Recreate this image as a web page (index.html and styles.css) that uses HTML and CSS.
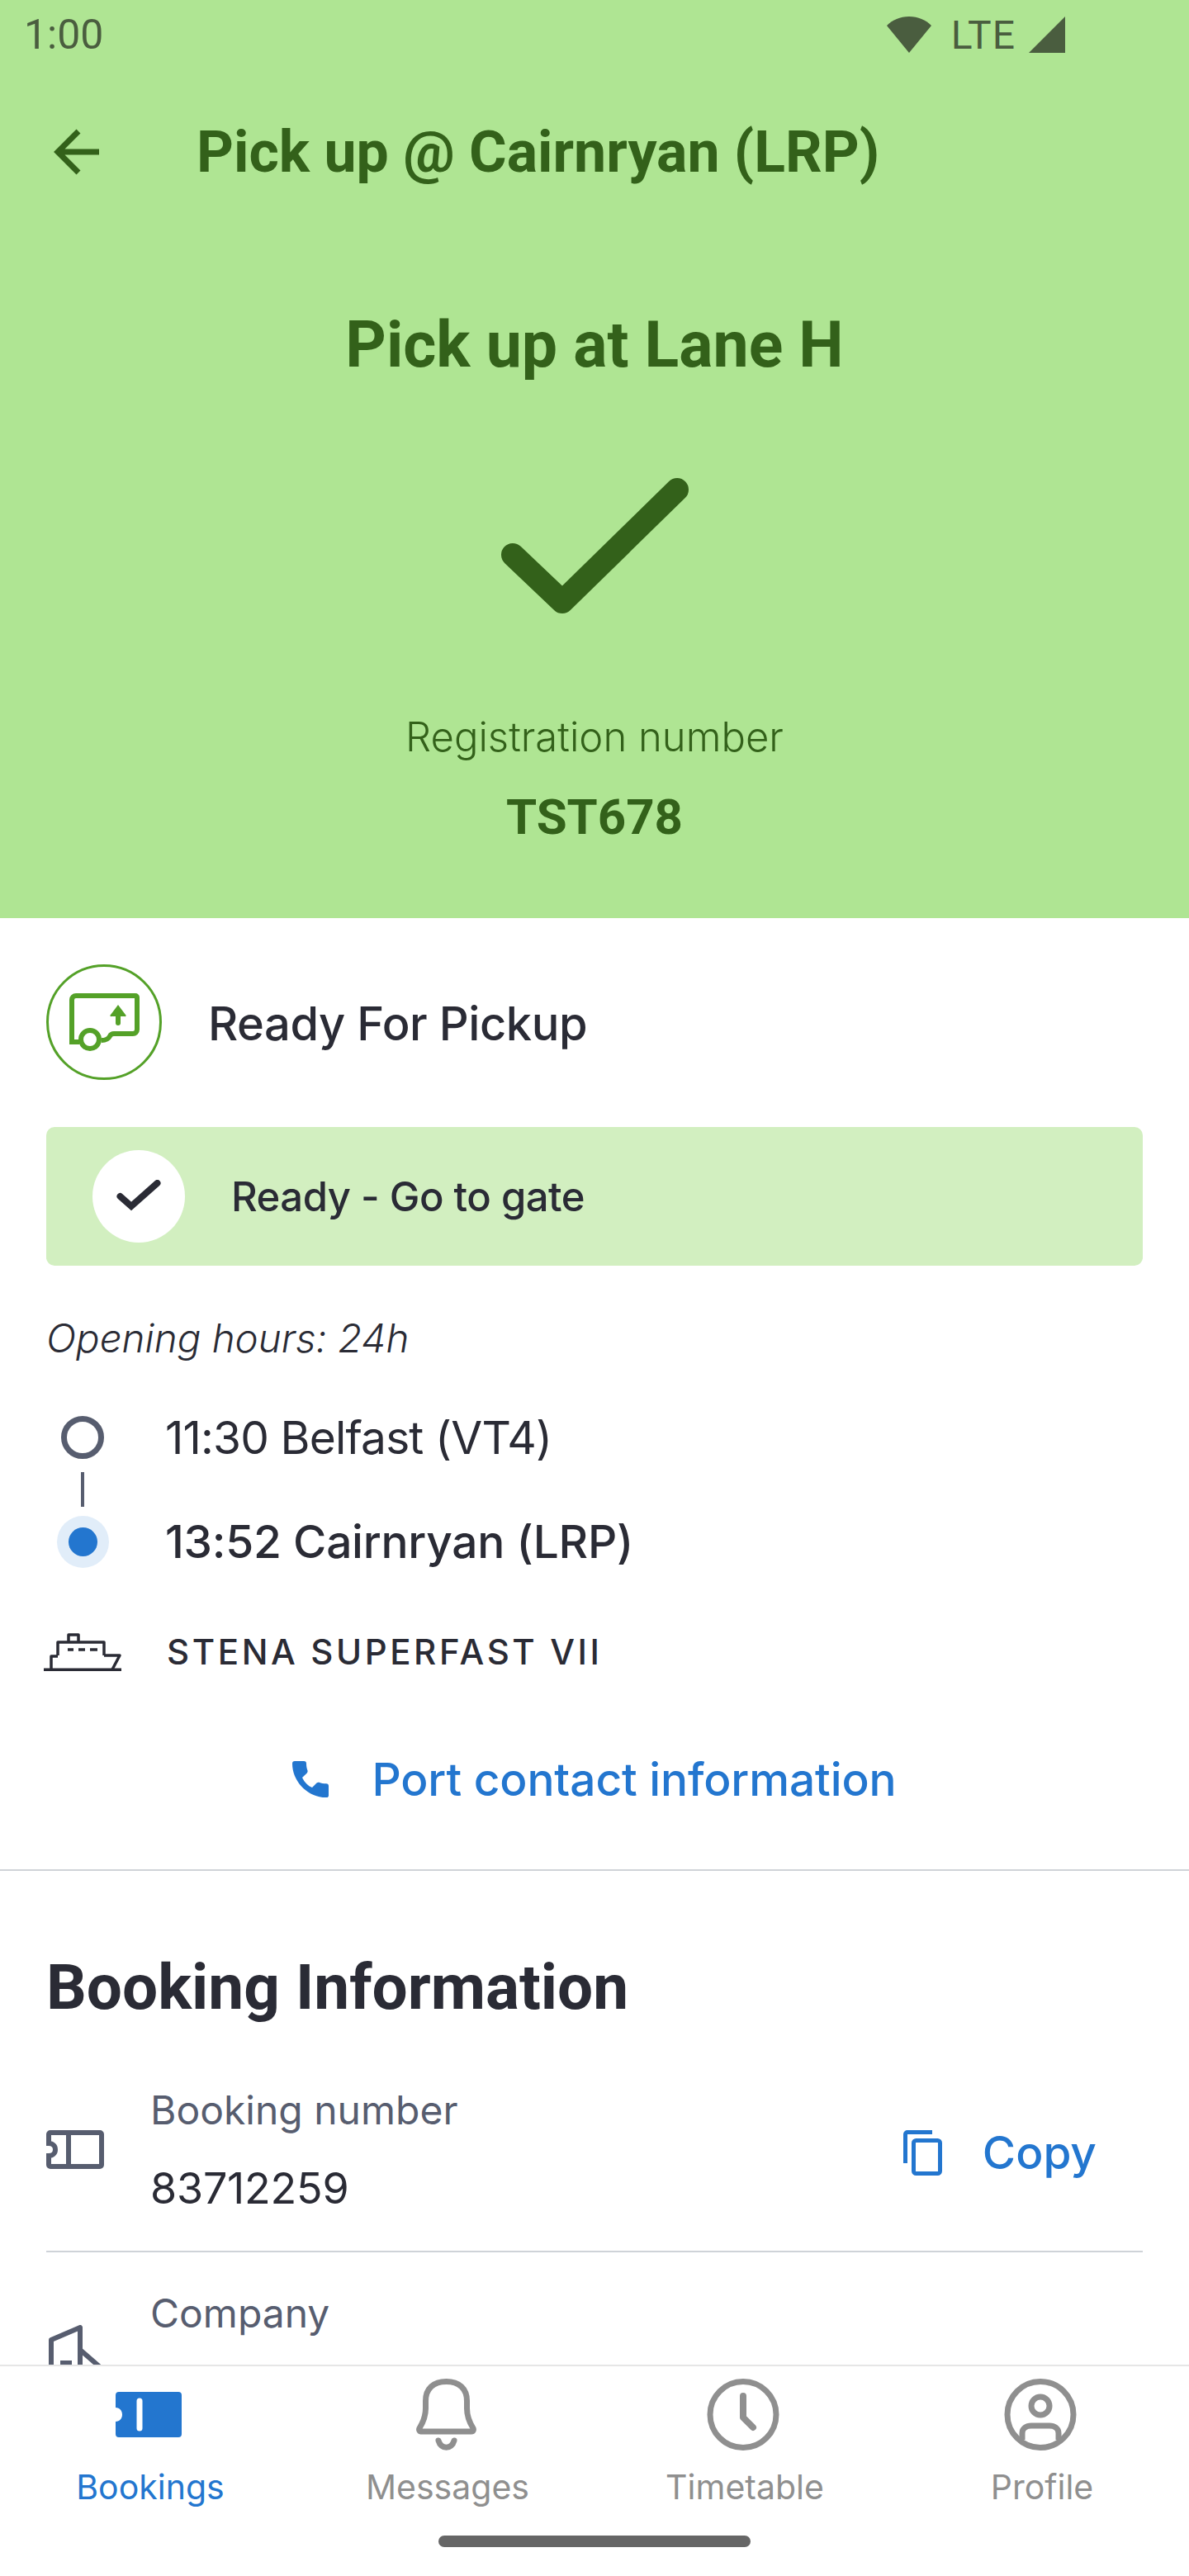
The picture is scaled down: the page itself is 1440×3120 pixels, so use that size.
FILE: index.html
```html
<!DOCTYPE html>
<html lang="en">
<head>
<meta charset="utf-8">
<title>Pick up @ Cairnryan (LRP)</title>
<link rel="stylesheet" href="styles.css">
</head>
<body>
<div class="screen">
  <header class="hero">
    <div class="status">
      <span class="clock">1:00</span>
      <div class="status-right">
        <svg class="wifi" viewBox="0 0 54 44"><path d="M27 44 0 11C7 4 16 0 27 0s20 4 27 11z"/></svg>
        <span class="lte">LTE</span>
        <svg class="signal" viewBox="0 0 44 44"><path d="M44 0v44H0z"/></svg>
      </div>
    </div>
    <div class="appbar">
      <svg class="back" viewBox="0 0 56 56"><path d="M56 28H6M31 3 6 28l25 25" fill="none" stroke="currentColor" stroke-width="7"/></svg>
      <h1 class="title">Pick up @ Cairnryan (LRP)</h1>
    </div>
    <div class="hero-body">
      <h2 class="lane">Pick up at Lane H</h2>
      <svg class="bigcheck" viewBox="0 0 227 166"><path d="M14 93l60 57L213 14" fill="none" stroke="currentColor" stroke-width="28" stroke-linecap="round" stroke-linejoin="round"/></svg>
      <p class="reg-label">Registration number</p>
      <p class="reg">TST678</p>
    </div>
  </header>

  <main class="content">
    <section class="top">
      <div class="state">
        <span class="state-ring">
          <svg viewBox="0 0 85 70" class="state-icon"><g fill="none" stroke="#54a128" stroke-width="6"><path d="M3 59V8a5 5 0 0 1 5-5h72a2 2 0 0 1 2 2v39a5 5 0 0 1-5 5H54c-3 0-4 1-5 3-2 4-5 5-10 5M0 59h12"/><circle cx="25" cy="56" r="11"/></g><path d="M59 36V22" stroke="#54a128" stroke-width="6" stroke-linecap="round"/><path d="M59 14l9 12a1 1 0 0 1-1 2H51a1 1 0 0 1-1-2z" fill="#54a128"/></svg>
        </span>
        <span class="state-text">Ready For Pickup</span>
      </div>
      <div class="banner">
        <span class="banner-dot">
          <svg viewBox="0 0 54 40" class="banner-check"><path d="M4.500 20 18 32 49.500 4" fill="none" stroke="#2a2b35" stroke-width="8" stroke-linecap="round"/></svg>
        </span>
        <span class="banner-text">Ready - Go to gate</span>
      </div>
      <p class="hours">Opening hours: 24h</p>
      <div class="route">
        <div class="stop">
          <span class="marker"><span class="open-dot"></span></span>
          <span class="stop-text thin">11:30 Belfast (VT4)</span>
        </div>
        <span class="route-line"></span>
        <div class="stop">
          <span class="marker"><span class="blue-dot"></span></span>
          <span class="stop-text strong">13:52 Cairnryan (LRP)</span>
        </div>
      </div>
      <div class="ship">
        <svg class="ship-icon" viewBox="0 0 94 46"><g fill="none" stroke="#2a2b35" stroke-width="3.500" stroke-linejoin="round"><path d="M30 11V2h12v9M17 27V11h56v16M9 44V28h8M73 27h19l-9 17"/></g><path d="M0 44.500h94" stroke="#2a2b35" stroke-width="4" stroke-linecap="round"/><path d="M29 20h7M42 20h8M56 20h9" stroke="#2a2b35" stroke-width="3.500"/></svg>
        <span class="ship-name">STENA SUPERFAST VII</span>
      </div>
      <a class="contact">
        <svg class="phone" viewBox="0 0 44 44"><path d="M3 0h11c2 0 3 1 3 3 0 3 .5 6 1.500 8.500.3 1 .1 2-.7 3L12 20c3 6 7 10 12 12l5.500-5.500c1-.8 2-1 3-.7 2.500 1 5.500 1.500 8.500 1.500 2 0 3 1 3 3v11c0 2-1 3-3 3C19 44 0 25 0 3c0-2 1-3 3-3z"/></svg>
        <span>Port contact information</span>
      </a>
    </section>

    <section class="info">
      <h3 class="info-title">Booking Information</h3>
      <div class="row">
        <svg class="row-icon" viewBox="0 0 70 47"><path d="M5 3h60a2 2 0 0 1 2 2v37a2 2 0 0 1-2 2H5a2 2 0 0 1-2-2V31c5 0 8-3 8-7.500S8 16 3 16V5a2 2 0 0 1 2-2zM27 3v41" fill="none" stroke="#575d6f" stroke-width="6"/></svg>
        <div class="row-text">
          <span class="row-label">Booking number</span>
          <span class="row-value">83712259</span>
        </div>
        <a class="copy">
          <svg class="copy-icon" viewBox="0 0 47 55"><path d="M35 2.500H5a2.500 2.500 0 0 0-2.500 2.500v35" fill="none" stroke="#2376cf" stroke-width="5"/><rect x="12.500" y="12.500" width="32" height="40" rx="3" fill="none" stroke="#2376cf" stroke-width="5"/></svg>
          <span>Copy</span>
        </a>
      </div>
      <div class="row row-second">
        <svg class="row-icon building" viewBox="0 0 64 66"><path d="M3 66V18L38 3v63M38 30l23 20v16M14 46h14M14 58h14" fill="none" stroke="#575d6f" stroke-width="6" stroke-linejoin="round"/></svg>
        <div class="row-text">
          <span class="row-label">Company</span>
        </div>
      </div>
    </section>
  </main>

  <nav class="nav">
    <div class="tabs">
      <div class="tab active">
        <span class="tab-icon"><svg viewBox="0 0 80 55" class="ico-ticket"><path d="M4 0h72a4 4 0 0 1 4 4v47a4 4 0 0 1-4 4H4a4 4 0 0 1-4-4V36c5 0 8-4 8-8.500S5 19 0 19V4a4 4 0 0 1 4-4z" fill="#2376cf"/><path d="M29 11v33" stroke="#fff" stroke-width="7" stroke-linecap="round"/></svg></span>
        <span class="tab-label">Bookings</span>
      </div>
      <div class="tab">
        <span class="tab-icon"><svg viewBox="0 0 73 87" class="ico-bell"><path d="M4 60c5-8 7.500-14 7.500-24v-9C11.500 12 21 3.500 36.500 3.500S61.500 12 61.500 27v9c0 10 2.500 16 7.500 24 1 2 0 4-2 4H6c-2 0-3-2-2-4z" fill="none" stroke="#8f8f8f" stroke-width="7"/><path d="M27 75c3 11 16 11 19 0" fill="none" stroke="#8f8f8f" stroke-width="7" stroke-linecap="round"/></svg></span>
        <span class="tab-label">Messages</span>
      </div>
      <div class="tab">
        <span class="tab-icon"><svg viewBox="0 0 88 87" class="ico-round"><circle cx="44" cy="43.500" r="40" fill="none" stroke="#8f8f8f" stroke-width="7"/><path d="M44 21v26l12 12" fill="none" stroke="#8f8f8f" stroke-width="8" stroke-linecap="round" stroke-linejoin="round"/></svg></span>
        <span class="tab-label">Timetable</span>
      </div>
      <div class="tab">
        <span class="tab-icon"><svg viewBox="0 0 88 87" class="ico-round"><circle cx="44" cy="43.500" r="40" fill="none" stroke="#8f8f8f" stroke-width="7"/><circle cx="44" cy="33" r="11" fill="none" stroke="#8f8f8f" stroke-width="7"/><path d="M22 74v-8c0-6 5-9 11-9h22c6 0 11 3 11 9v8" fill="none" stroke="#8f8f8f" stroke-width="7"/></svg></span>
        <span class="tab-label">Profile</span>
      </div>
    </div>
    <span class="home-bar"></span>
  </nav>
</div>
</body>
</html>
```
FILE: styles.css
```css
* { box-sizing: border-box; margin: 0; padding: 0; }
html, body { width: 1440px; height: 3120px; overflow: hidden; background: #fff; }
body { font-family: Inter, "Liberation Sans", sans-serif; color: #2a2b35; }
.screen { position: relative; width: 1440px; height: 3120px; overflow: hidden; }

.hero { height: 1112px; background: #afe593; color: #33611a; }
.status { height: 84px; display: flex; justify-content: space-between; align-items: center; padding: 0 150px 0 29px; color: #4a5d3f; }
.clock { font: 400 50px Roboto, sans-serif; }
.status-right { display: flex; align-items: center; }
.wifi { width: 54px; height: 44px; fill: #4a5d3f; }
.lte { font: 400 48px Roboto, sans-serif; letter-spacing: 1px; margin: 0 16px 0 24px; }
.signal { width: 44px; height: 44px; fill: #4a5d3f; }
.appbar { height: 100px; margin-top: 50px; display: flex; align-items: center; padding-left: 64px; gap: 118px; }
.back { width: 56px; height: 56px; }
.title { font: 700 69.8px Roboto, sans-serif; white-space: nowrap; }
.hero-body { display: flex; flex-direction: column; align-items: center; padding-top: 134px; }
.lane { font: 700 77px/100px Roboto, sans-serif; }
.bigcheck { width: 227px; height: 166px; margin-top: 111px; }
.reg-label { margin-top: 118px; font: 300 49px/60px Inter, sans-serif; }
.reg { margin-top: 32px; font: 700 60px/70px Roboto, sans-serif; }

.top { padding: 56px 56px 0; height: 1154px; border-bottom: 2px solid #cfd3d8; }
.state { display: flex; align-items: center; gap: 56px; }
.state-ring { width: 140px; height: 140px; border: 3px solid #54a128; border-radius: 50%; display: flex; align-items: center; justify-content: center; }
.state-icon { width: 85px; height: 70px; }
.state-text { font: 500 56px Inter, sans-serif; letter-spacing: -0.45px; padding-top: 4px; }
.banner { margin-top: 57px; height: 168px; border-radius: 10px; background: #d2efc0; display: flex; align-items: center; padding-left: 56px; gap: 56px; }
.banner-dot { width: 112px; height: 112px; border-radius: 50%; background: #fff; display: flex; align-items: center; justify-content: center; }
.banner-check { width: 54px; height: 40px; }
.banner-text { font: 500 49px Inter, sans-serif; letter-spacing: -0.5px; }
.hours { margin-top: 58px; font: italic 300 47.5px/60px Inter, sans-serif; }
.route { margin-top: 58px; display: flex; flex-direction: column; }
.stop { display: flex; align-items: center; height: 64px; gap: 56px; }
.marker { width: 88px; display: flex; justify-content: center; flex: none; }
.open-dot { width: 52px; height: 52px; border: 7px solid #575d6f; border-radius: 50%; }
.blue-dot { width: 35px; height: 35px; border-radius: 50%; background: #2376cf; box-shadow: 0 0 0 14px #e1edf9; }
.stop-text { font: 400 55px Inter, sans-serif; }
.thin { letter-spacing: -0.85px; }
.strong { font-weight: 500; letter-spacing: -0.25px; }
.route-line { width: 4px; height: 42px; margin: 10px 0 10px 42px; background: #575d6f; }
.ship { margin-top: 76px; display: flex; align-items: center; gap: 55px; margin-left: -3px; }
.ship-icon { width: 94px; height: 46px; }
.ship-name { font: 500 42px Inter, sans-serif; letter-spacing: 3.6px; }
.contact { margin-top: 96px; display: flex; justify-content: center; align-items: center; gap: 52px; color: #2376cf; font: 500 55px Inter, sans-serif; letter-spacing: -0.1px; }
.phone { width: 44px; height: 44px; fill: #2376cf; }

.info { padding: 0 56px; }
.info-title { margin-top: 91px; font: 700 76.5px/100px Roboto, sans-serif; }
.row { margin-top: 71px; height: 200px; display: flex; align-items: flex-start; border-bottom: 2px solid #cfd3d8; }
.row-second { border: 0; margin-top: 0; padding-top: 46px; height: 180px; }
.row-icon { width: 70px; height: 47px; margin-top: 52px; flex: none; }
.building { width: 64px; height: 66px; margin: 42px 3px 0; }
.row-text { margin-left: 56px; display: flex; flex-direction: column; flex: 1; }
.row-label { font: 400 48px/56px Inter, sans-serif; color: #575d6f; }
.row-value { margin-top: 39px; font: 400 52px/56px Inter, sans-serif; letter-spacing: -0.2px; }
.copy { margin: 46px 56px 0 0; display: flex; align-items: center; gap: 49px; color: #2376cf; font: 500 55px Inter, sans-serif; }
.copy-icon { width: 47px; height: 55px; }

.nav { position: absolute; left: 0; right: 0; top: 2864px; bottom: 0; background: #fff; border-top: 2px solid #e6e6e6; }
.tabs { display: grid; grid-template-columns: repeat(4, 360px); }
.tab { display: flex; flex-direction: column; align-items: center; font: 400 41px/48px Inter, sans-serif; color: #8f8f8f; padding-top: 15px; }
.tab.active { color: #2376cf; }
.tab-label { margin-left: 4px; }
.tab-icon { height: 87px; display: flex; align-items: center; margin-bottom: 20px; }
.ico-ticket { width: 80px; height: 55px; }
.ico-bell { width: 73px; height: 87px; }
.ico-round { width: 88px; height: 87px; }
.home-bar { position: absolute; left: 531px; top: 205px; width: 378px; height: 14px; border-radius: 7px; background: #666; }
```
